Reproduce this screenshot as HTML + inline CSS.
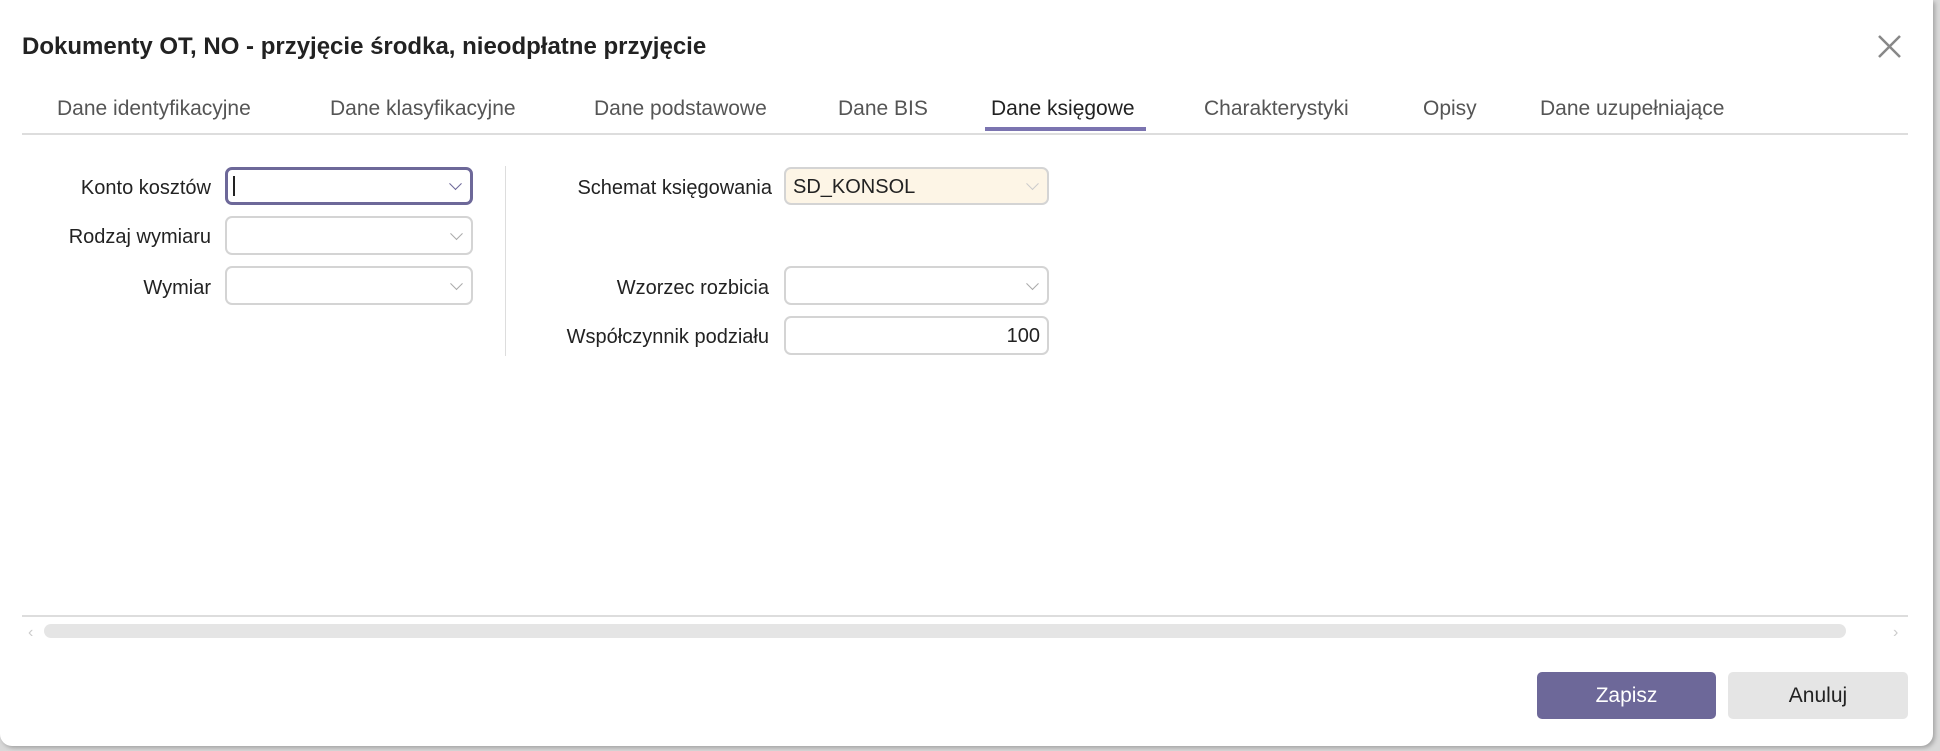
<!DOCTYPE html>
<html><head><meta charset="utf-8"><style>
*{box-sizing:border-box;margin:0;padding:0}
body{width:1940px;height:751px;background:#d9d9d9;font-family:"Liberation Sans",sans-serif;position:relative;overflow:hidden}
.dlg{position:absolute;left:0;top:0;width:1933px;height:746px;background:#fff;border-radius:0 0 12px 12px;box-shadow:2px 2px 4px rgba(0,0,0,.25)}
.a{position:absolute;white-space:nowrap}
.title{left:22px;top:33px;font-size:24px;font-weight:bold;color:#222}
.tab{top:97px;font-size:21px;color:#555}
.lbl{font-size:20px;color:#222;text-align:right}
.inp{position:absolute;border:2px solid #d4d4d4;border-radius:7px;background:#fff}
.chev{position:absolute;right:10px;top:50%;width:9px;height:9px;border-right:1.5px solid #aaa;border-bottom:1.5px solid #aaa;transform:translateY(-75%) rotate(45deg)}
.btn{position:absolute;top:672px;height:47px;border-radius:5px;font-size:21px;text-align:center;line-height:47px}
</style></head><body>
<div class="dlg">
<div class="a title">Dokumenty OT, NO - przyjęcie środka, nieodpłatne przyjęcie</div>
<svg class="a" style="left:1877px;top:34px" width="25" height="25"><path d="M2 2L23 23M23 2L2 23" stroke="#888" stroke-width="2.5"/></svg>
<div class="a tab" style="left:57px">Dane identyfikacyjne</div>
<div class="a tab" style="left:330px">Dane klasyfikacyjne</div>
<div class="a tab" style="left:594px">Dane podstawowe</div>
<div class="a tab" style="left:838px">Dane BIS</div>
<div class="a tab" style="left:991px;color:#222">Dane księgowe</div>
<div class="a tab" style="left:1204px">Charakterystyki</div>
<div class="a tab" style="left:1423px">Opisy</div>
<div class="a tab" style="left:1540px">Dane uzupełniające</div>
<div class="a" style="left:22px;top:133px;width:1886px;height:2px;background:#ddd"></div>
<div class="a" style="left:985px;top:127px;width:161px;height:4px;background:#7b74b0"></div>

<div class="a lbl" style="right:1722px;top:177px">Konto kosztów</div>
<div class="a lbl" style="right:1722px;top:226px">Rodzaj wymiaru</div>
<div class="a lbl" style="right:1722px;top:277px">Wymiar</div>
<div class="inp" style="left:225px;top:167px;width:248px;height:38px;border:3px solid #6d6899"><div style="position:absolute;left:5px;top:6px;width:1.5px;height:20px;background:#222"></div><div class="chev" style="border-color:#6d6899"></div></div>
<div class="inp" style="left:225px;top:216px;width:248px;height:39px"><div class="chev"></div></div>
<div class="inp" style="left:225px;top:266px;width:248px;height:39px"><div class="chev"></div></div>
<div class="a" style="left:505px;top:166px;width:1px;height:190px;background:#ddd"></div>

<div class="a lbl" style="right:1161px;top:177px">Schemat księgowania</div>
<div class="a lbl" style="right:1164px;top:277px">Wzorzec rozbicia</div>
<div class="a lbl" style="right:1164px;top:326px">Współczynnik podziału</div>
<div class="inp" style="left:784px;top:167px;width:265px;height:38px;background:#fdf5e6"><div class="a" style="left:7px;top:7px;font-size:20px;color:#222">SD_KONSOL</div><div class="chev" style="border-color:#ccc"></div></div>
<div class="inp" style="left:784px;top:266px;width:265px;height:39px"><div class="chev"></div></div>
<div class="inp" style="left:784px;top:316px;width:265px;height:39px"><div class="a" style="right:7px;top:7px;font-size:20px;color:#222">100</div></div>

<div class="a" style="left:22px;top:615px;width:1886px;height:2px;background:#ddd"></div>
<div class="a" style="left:44px;top:624px;width:1802px;height:14px;border-radius:7px;background:#e5e5e5"></div>
<div class="a" style="left:28px;top:624px;color:#ccc;font-size:16px">‹</div>
<div class="a" style="left:1893px;top:624px;color:#ccc;font-size:16px">›</div>
<div class="btn" style="left:1537px;width:179px;background:#6d6899;color:#fff">Zapisz</div>
<div class="btn" style="left:1728px;width:180px;background:#e5e5e5;color:#222">Anuluj</div>
</div>
</body></html>
